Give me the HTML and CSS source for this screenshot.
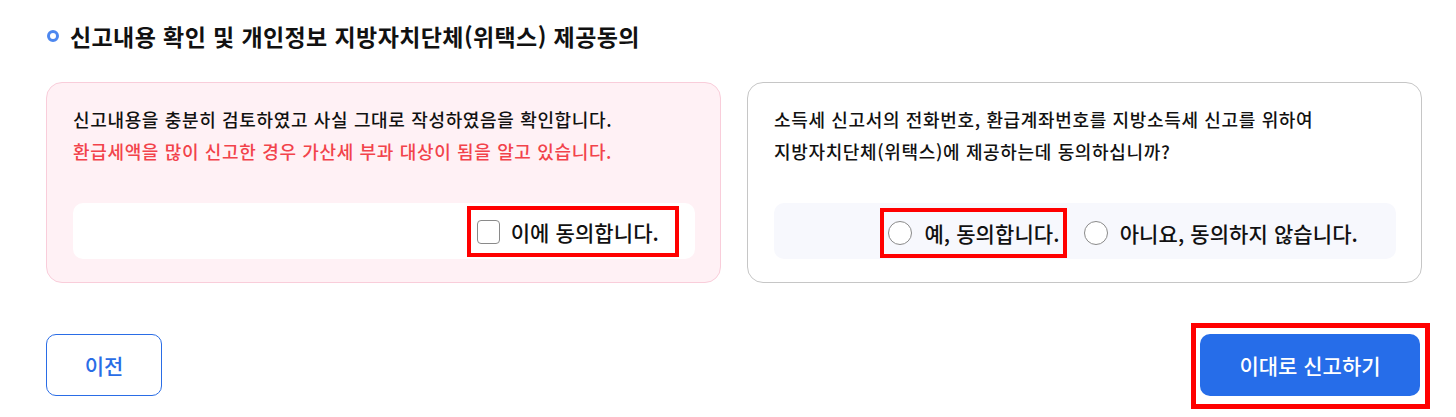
FILE: index.html
```html
<!DOCTYPE html>
<html lang="ko">
<head>
<meta charset="utf-8">
<link rel="stylesheet" href="styles.css">
</head>
<body>
<div class="page">
  <h2 class="title"><span class="dot"></span>신고내용 확인 및 개인정보 지방자치단체(위택스) 제공동의</h2>
  <div class="cards">
    <div class="card card-pink">
      <p class="desc">신고내용을 충분히 검토하였고 사실 그대로 작성하였음을 확인합니다.<br><span class="warn">환급세액을 많이 신고한 경우 가산세 부과 대상이 됨을 알고 있습니다.</span></p>
      <div class="choice choice-white">
        <label class="opt mark mark-check"><span class="box"></span>이에 동의합니다.</label>
      </div>
    </div>
    <div class="card card-gray">
      <p class="desc">소득세 신고서의 전화번호, 환급계좌번호를 지방소득세 신고를 위하여<br>지방자치단체(위택스)에 제공하는데 동의하십니까?</p>
      <div class="choice choice-blue">
        <label class="opt mark mark-radio"><span class="radio"></span>예, 동의합니다.</label>
        <label class="opt opt-no"><span class="radio"></span>아니요, 동의하지 않습니다.</label>
      </div>
    </div>
  </div>
  <div class="actions">
    <button class="btn btn-prev">이전</button>
    <div class="mark-btn"><button class="btn btn-submit">이대로 신고하기</button></div>
  </div>
</div>
</body>
</html>
```
FILE: styles.css
```css
* { box-sizing: border-box; }
html, body { margin: 0; padding: 0; background: #fff; }
body {
  font-family: "Noto Sans CJK KR", "Noto Sans", sans-serif;
  color: #111;
}
.page {
  padding: 19px 35px 0 46px;
}
.title {
  display: flex;
  align-items: center;
  margin: 0;
  height: 34px;
  font-size: 23px;
  font-weight: 700;
  letter-spacing: 0.4px;
  color: #111;
}
.dot {
  width: 12px;
  height: 12px;
  border: 3px solid #4d87ef;
  border-radius: 50%;
  margin-left: 1px;
  margin-right: 11px;
}
.cards {
  display: grid;
  grid-template-columns: 675px 675px;
  gap: 26px;
  margin-top: 29px;
}
.card {
  border-radius: 16px;
  padding: 20px 25px 23px 26px;
  height: 201px;
  display: flex;
  flex-direction: column;
}
.card-pink {
  background: #fff1f5;
  border: 1px solid #f9cdda;
}
.card-gray {
  background: #fff;
  border: 1px solid #c6c6c6;
}
.desc {
  margin: 0;
  font-size: 18px;
  line-height: 32px;
  font-weight: 500;
  letter-spacing: 0.65px;
  color: #111;
}
.warn { color: #f2434b; }
.choice {
  margin-top: auto;
  height: 56px;
  border-radius: 10px;
  display: flex;
  justify-content: flex-end;
  align-items: center;
  padding-right: 16px;
}
.choice-white { background: #fff; }
.choice-blue { background: #f7f8fd; padding-right: 16px; }
.opt {
  display: flex;
  align-items: center;
  font-size: 21px;
  font-weight: 500;
  letter-spacing: 0.1px;
  color: #111;
  height: 51px;
}
.mark { outline: 4px solid #ff0000; outline-offset: -4px; }
.mark-check { padding: 0 20px 0 10px; margin-top: 1px; }
.mark-radio { padding: 0 7px 0 8px; margin-top: 4px; height: 50px; }
.opt-no { padding: 0 22px 0 17px; margin-top: 4px; height: 50px; }
.box {
  width: 23px;
  height: 24px;
  border: 1px solid #8a8a8a;
  border-radius: 4px;
  background: #fff;
  margin-right: 11px;
}
.radio {
  width: 24px;
  height: 24px;
  border: 1px solid #8a8a8a;
  border-radius: 50%;
  background: #fff;
  margin-right: 12px;
}
.actions {
  display: flex;
  justify-content: space-between;
  align-items: flex-start;
  margin-top: 40px;
}
.btn {
  font-family: inherit;
  font-size: 21px;
  font-weight: 500;
  border-radius: 10px;
  height: 62px;
  cursor: pointer;
}
.btn-prev {
  width: 116px;
  margin-top: 11px;
  background: #fff;
  border: 1px solid #2a6de6;
  color: #2a6de6;
}
.mark-btn {
  border: 5px solid #ff0000;
  padding: 6px 5px 8px 4px;
  margin-right: -9px;
}
.btn-submit {
  display: block;
  width: 220px;
  background: #266de9;
  border: none;
  color: #fff;
}
```
